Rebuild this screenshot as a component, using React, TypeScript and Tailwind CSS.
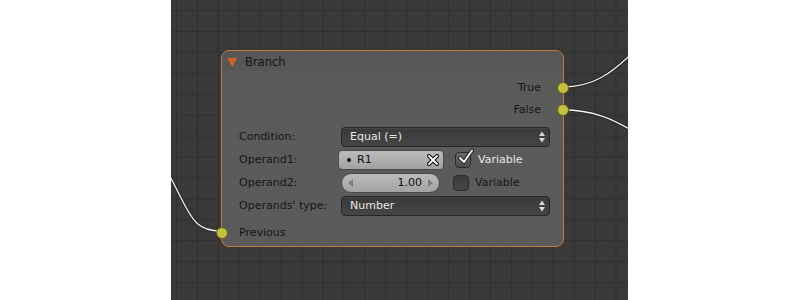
import { ReactNode } from "react"

const font = { fontFamily: '"DejaVu Sans", sans-serif' }

// Socket-Kreis am Rand der Node
function Socket({ side }: { side: "left" | "right" }) {
  return (
    <span
      className={`absolute top-1/2 -translate-y-1/2 w-[12px] h-[12px] rounded-full bg-[#c4c23c] border border-[#5e5d1c] ${
        side === "right" ? "right-[-6px]" : "left-[-6px]"
      }`}
    />
  )
}

function Row({ label, children }: { label: string; children: ReactNode }) {
  return (
    <div className="flex items-center h-[20px]">
      <span className="w-[102px] shrink-0 text-[#161616]">{label}</span>
      {children}
    </div>
  )
}

function UpDown() {
  return (
    <svg width="8" height="14" viewBox="0 0 8 14" className="ml-auto mr-[3px]">
      <path d="M4 1.5 L7 6 L1 6 Z" fill="#d8d8d8" />
      <path d="M4 12.5 L7 8 L1 8 Z" fill="#d8d8d8" />
    </svg>
  )
}

function Dropdown({ value }: { value: string }) {
  return (
    <div className="flex items-center w-[209px] h-[20px] rounded-[4px] border border-[#262626] bg-gradient-to-b from-[#3a3a3a] to-[#454545] pl-[8px] text-[#e8e8e8] shadow-[inset_0_1px_0_rgba(255,255,255,0.06)]">
      {value}
      <UpDown />
    </div>
  )
}

function Checkbox({ checked }: { checked?: boolean }) {
  return (
    <span
      className={`relative flex items-center justify-center w-[16px] h-[16px] rounded-[4px] border border-[#2a2a2a] ${
        checked ? "bg-gradient-to-b from-[#6a6a6a] to-[#4c4c4c]" : "bg-gradient-to-b from-[#3a3a3a] to-[#474747]"
      }`}
    >
      {checked && (
        <svg width="18" height="17" viewBox="0 0 18 17" className="absolute left-[1px] top-[-5px]">
          <path d="M3 10 L7 14 L15 2.5" fill="none" stroke="#111" strokeWidth="3.6" strokeLinecap="round" strokeLinejoin="round" />
          <path d="M3 10 L7 14 L15 2.5" fill="none" stroke="#fff" strokeWidth="2" strokeLinecap="round" strokeLinejoin="round" />
        </svg>
      )}
    </span>
  )
}

export default function App() {
  return (
    <div className="w-[800px] h-[300px] bg-white flex overflow-hidden text-[11px]" style={font}>
      <div className="w-[171px] shrink-0" />

      {/* Node-Editor Canvas */}
      <div className="relative w-[457px] h-[300px] shrink-0 bg-[#393939] overflow-hidden">
        <svg className="absolute inset-0" width="457" height="300">
          <defs>
            <pattern id="grid" x="5" y="10" width="20.93" height="20.93" patternUnits="userSpaceOnUse">
              <path d="M0.5 0 V20.93 M0 0.5 H20.93" stroke="#2f2f2f" strokeWidth="1" fill="none" />
            </pattern>
          </defs>
          <rect width="457" height="300" fill="url(#grid)" />
          {/* Verbindungen */}
          <g fill="none" strokeLinecap="round">
            <path d="M50 231 C 28 231, 22 222, 10 198 S -4 170, -10 163" stroke="#262626" strokeWidth="3.2" />
            <path d="M50 231 C 28 231, 22 222, 10 198 S -4 170, -10 163" stroke="#f2f2f2" strokeWidth="1.3" />
            <path d="M392 87 C 420 87, 440 76, 470 44" stroke="#262626" strokeWidth="3.2" />
            <path d="M392 87 C 420 87, 440 76, 470 44" stroke="#f2f2f2" strokeWidth="1.3" />
            <path d="M392 110 C 420 110, 440 117, 470 136" stroke="#262626" strokeWidth="3.2" />
            <path d="M392 110 C 420 110, 440 117, 470 136" stroke="#f2f2f2" strokeWidth="1.3" />
          </g>
        </svg>

        {/* Branch-Node */}
        <div className="absolute left-[50px] top-[50px] w-[343px] h-[197px] rounded-[8px] border border-[#c07d38] bg-[#5d5d5d]/95 flex flex-col">
          <div className="h-[20px] shrink-0 flex items-center rounded-t-[7px] bg-[#575757] pl-[5px] pt-[3px] text-[#151515] text-[11.5px]">
            <svg width="11" height="11" viewBox="0 0 11 11" className="mr-[7px]">
              <path d="M0.5 1 L10 1 L5.25 10 Z" fill="#d9601c" />
            </svg>
            Branch
          </div>

          <div className="flex flex-col pt-[6px] pr-[13px] pl-[17px]">
            <div className="relative h-[22px] flex items-center justify-end pr-[9px] text-[#161616]">
              True
              <div className="absolute right-[-13px] top-0 bottom-0 w-0">
                <Socket side="right" />
              </div>
            </div>
            <div className="relative h-[22px] flex items-center justify-end pr-[9px] text-[#161616]">
              False
              <div className="absolute right-[-13px] top-0 bottom-0 w-0">
                <Socket side="right" />
              </div>
            </div>

            <div className="flex flex-col gap-[3px] mt-[6px]">
              <Row label="Condition:">
                <Dropdown value="Equal (=)" />
              </Row>
              <Row label="Operand1:">
                <div className="flex items-center w-[106px] h-[20px] -ml-[3px] rounded-[4px] border border-[#4a4a4a] bg-gradient-to-b from-[#bcbcbc] to-[#a2a2a2] pl-[8px] text-[#0e0e0e]">
                  <span className="w-[4px] h-[4px] rounded-full bg-[#111] mr-[6px]" />
                  R1
                  <svg width="12" height="12" viewBox="0 0 12 12" className="ml-auto mr-[4px]">
                    <path d="M2 2 L10 10 M10 2 L2 10" stroke="#111" strokeWidth="4" strokeLinecap="round" />
                    <path d="M2 2 L10 10 M10 2 L2 10" stroke="#fff" strokeWidth="1.8" strokeLinecap="round" />
                  </svg>
                </div>
                <span className="ml-[11px]">
                  <Checkbox checked />
                </span>
                <span className="ml-[7px] text-[#e8e8e8]">Variable</span>
              </Row>
              <Row label="Operand2:">
                <div className="flex items-center w-[99px] h-[20px] rounded-full border border-[#4a4a4a] bg-gradient-to-b from-[#bcbcbc] to-[#a2a2a2] px-[6px] text-[#0e0e0e]">
                  <svg width="5" height="8" viewBox="0 0 5 8">
                    <path d="M5 0 L0 4 L5 8 Z" fill="#7c7c7c" />
                  </svg>
                  <span className="ml-auto mr-[6px]">1.00</span>
                  <svg width="5" height="8" viewBox="0 0 5 8">
                    <path d="M0 0 L5 4 L0 8 Z" fill="#7c7c7c" />
                  </svg>
                </div>
                <span className="ml-[13px]">
                  <Checkbox />
                </span>
                <span className="ml-[6px] text-[#161616]">Variable</span>
              </Row>
              <Row label="Operands' type:">
                <Dropdown value="Number" />
              </Row>
            </div>

            <div className="relative h-[20px] mt-[7px] flex items-center text-[#161616]">
              Previous
              <div className="absolute left-[-17px] top-0 bottom-0 w-0">
                <Socket side="left" />
              </div>
            </div>
          </div>
        </div>
      </div>
    </div>
  )
}
